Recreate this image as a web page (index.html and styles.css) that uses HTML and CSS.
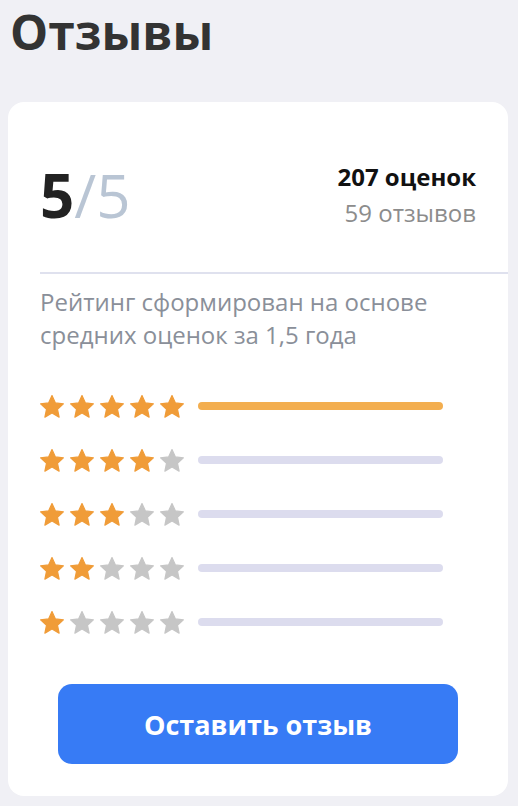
FILE: index.html
```html
<!DOCTYPE html>
<html lang="ru">
<head>
    <meta charset="UTF-8">
    <meta name="viewport" content="width=device-width, initial-scale=1.0">
    <title>Отзывы</title>
    <link rel="stylesheet" href="styles.css">
</head>
<body>
    <h1 class="title">Отзывы</h1>

    <div class="card">
        <div class="summary">
            <div class="score"><b>5</b><span>/5</span></div>
            <div class="counts">
                <div class="counts-main">207 оценок</div>
                <div class="counts-sub">59 отзывов</div>
            </div>
        </div>

        <div class="divider"></div>

        <p class="note">Рейтинг сформирован на основе средних оценок за 1,5 года</p>

        <div class="rows" id="rows"></div>

        <button class="btn">Оставить отзыв</button>
    </div>

    <script>
        const star = '<svg class="star" viewBox="2 2.2 20 19"><path d="M12 2.6l2.85 6.1 6.65.75-4.95 4.5 1.38 6.6L12 17.2l-5.93 3.35 1.38-6.6-4.95-4.5 6.65-.75z"/></svg>';
        const counts = [59, 0, 0, 0, 0];
        let html = '';

        for (let r = 5; r >= 1; r--) {
            let stars = '';
            for (let i = 1; i <= 5; i++) {
                stars += star.replace('class="star"', 'class="star' + (i <= r ? ' on' : '') + '"');
            }
            const fill = counts[5 - r] > 0 ? 'bar on' : 'bar';
            html += `<div class="row">
                        <div class="stars">${stars}</div>
                        <div class="${fill}"></div>
                     </div>`;
        }

        document.getElementById('rows').innerHTML = html;
    </script>
</body>
</html>
```

FILE: styles.css
```css
body {
    margin: 0;
    padding: 0 10px 10px 8px;
    background: #f0f0f5;
    font-family: "Open Sans", "Noto Sans", sans-serif;
}

.title {
    margin: 0;
    padding: 4px 0 0 2px;
    height: 102px;
    box-sizing: border-box;
    font-size: 48px;
    line-height: 56px;
    font-weight: 700;
    color: #333333;
}

.card {
    background: #fff;
    border-radius: 16px;
    padding: 0 32px 32px;
}

.summary {
    display: flex;
    justify-content: space-between;
    align-items: center;
    min-height: 106px;
    padding: 40px 0 24px;
}

.score {
    font-size: 60px;
    line-height: 60px;
    color: #222;
}

.score b {
    font-weight: 700;
}

.score span {
    color: #b9c5d4;
}

.counts {
    text-align: right;
}

.counts-main {
    font-size: 24px;
    line-height: 36px;
    font-weight: 700;
    color: #111;
}

.counts-sub {
    font-size: 24px;
    line-height: 36px;
    color: #8c8c8c;
}

.divider {
    height: 2px;
    background: #dfe1ee;
    margin-right: -32px;
}

.note {
    margin: 11px 0 0;
    font-size: 24px;
    line-height: 33px;
    color: #8a8f99;
}

.rows {
    margin-top: 43px;
    display: flex;
    flex-direction: column;
    gap: 30px;
}

.row {
    display: flex;
    align-items: center;
    gap: 14px;
    height: 24px;
}

.stars {
    display: flex;
    gap: 6px;
}

.star {
    width: 24px;
    height: 23px;
    fill: #c6c6c6;
    stroke: #c6c6c6;
    stroke-width: 1;
    stroke-linejoin: round;
}

.star.on {
    fill: #f09c38;
    stroke: #f09c38;
}

.bar {
    width: 245px;
    height: 8px;
    border-radius: 4px;
    background: #dcdcee;
}

.bar.on {
    background: #f3ae4f;
}

.btn {
    display: block;
    width: 400px;
    height: 80px;
    margin: 50px auto 0;
    border: none;
    border-radius: 14px;
    background: #377bf5;
    color: #fff;
    font-family: inherit;
    font-size: 27px;
    font-weight: 700;
}
```
